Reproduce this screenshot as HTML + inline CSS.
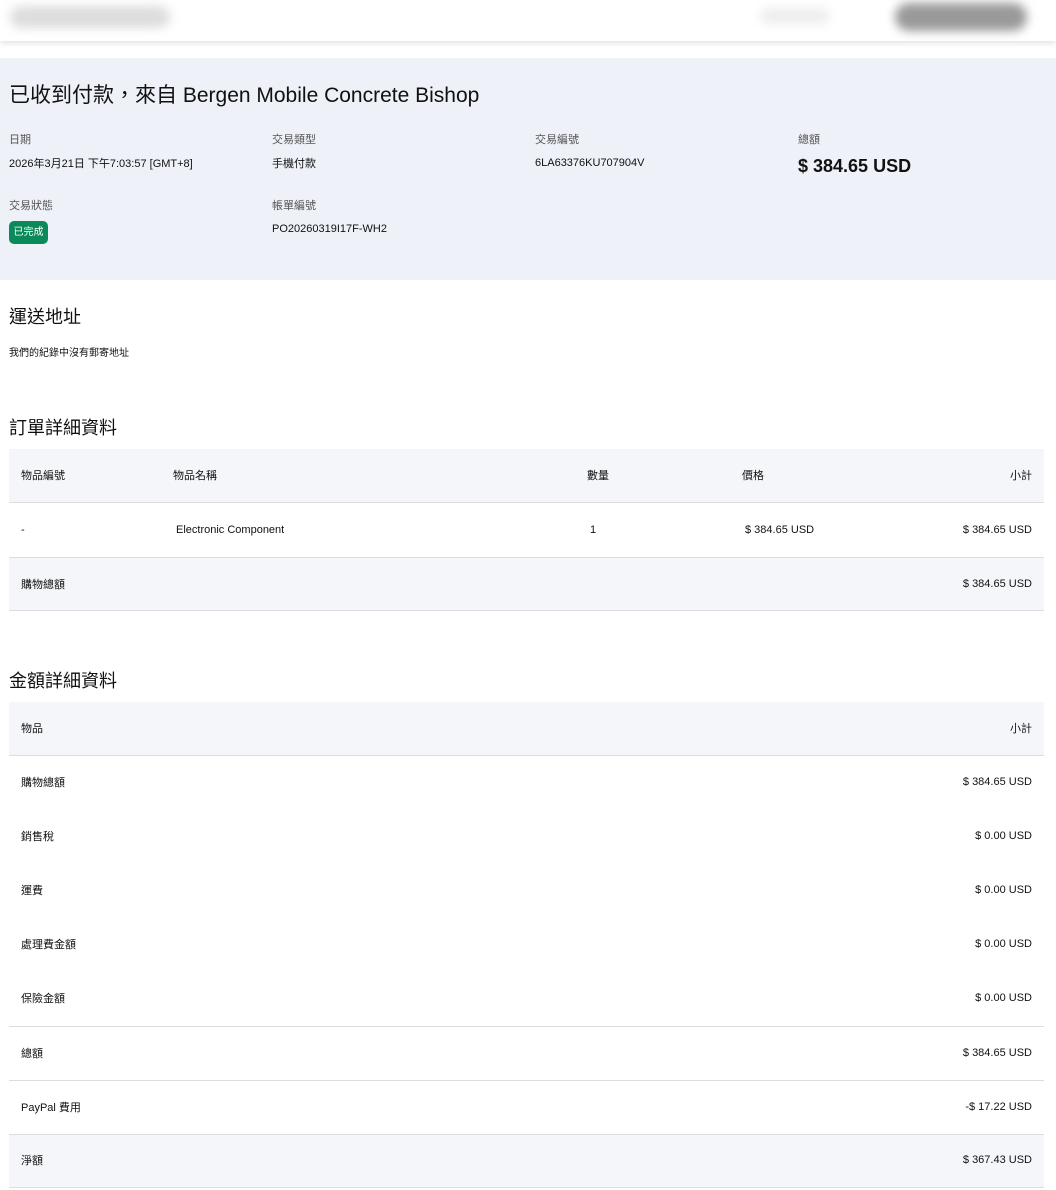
<!DOCTYPE html>
<html><head><meta charset="utf-8"><style>
*{margin:0;padding:0;box-sizing:border-box}
body{width:1056px;height:1190px;background:#fff;font-family:"Liberation Sans","Noto Sans CJK TC",sans-serif;color:#111;position:relative;overflow:hidden}
.a{position:absolute;white-space:nowrap}
.c{margin-top:-2px}
.hdr{position:absolute;left:0;top:0;width:1056px;height:41px;background:#fff;box-shadow:0 2px 6px rgba(0,0,0,.12)}
.blur{position:absolute;filter:blur(5px);border-radius:12px}
.panel{position:absolute;left:0;top:58px;width:1056px;height:222px;background:#eef1f8}
.lbl{font-size:11px;color:#555}
.val{font-size:11px;color:#111}
.sm{font-size:11px}
.row{position:absolute;left:9px;width:1035px}
.bg{background:#f5f6fa}
.bl{border-bottom:1px solid #dcdde2}
h2{position:absolute;font-size:18px;font-weight:normal;left:9px}
</style></head><body>
<div class="hdr">
<div class="blur" style="left:10px;top:6px;width:160px;height:22px;background:#ddd"></div>
<div class="blur" style="left:760px;top:8px;width:70px;height:16px;background:#eee"></div>
<div class="blur" style="left:895px;top:3px;width:132px;height:28px;background:#999;border-radius:16px"></div>
</div>
<div class="panel"></div>
<div class="a" style="left:9px;top:79px;font-size:21px">已收到付款，來自 Bergen Mobile Concrete Bishop</div>
<div class="a lbl c" style="left:9px;top:133px">日期</div>
<div class="a lbl c" style="left:272px;top:133px">交易類型</div>
<div class="a lbl c" style="left:535px;top:133px">交易編號</div>
<div class="a lbl c" style="left:798px;top:133px">總額</div>
<div class="a val c" style="left:9px;top:157px">2026年3月21日 下午7:03:57 [GMT+8]</div>
<div class="a val c" style="left:272px;top:157px">手機付款</div>
<div class="a val" style="left:535px;top:157px">6LA63376KU707904V</div>
<div class="a" style="left:798px;top:156px;font-size:18px;font-weight:bold">$ 384.65 USD</div>
<div class="a lbl c" style="left:9px;top:199px">交易狀態</div>
<div class="a lbl c" style="left:272px;top:199px">帳單編號</div>
<div class="a" style="left:9px;top:221px;width:39px;height:23px;background:#0a8a5a;color:#fff;border-radius:5px;font-size:10px;line-height:23px;text-align:center">已完成</div>
<div class="a val" style="left:272px;top:223px">PO20260319I17F-WH2</div>

<h2 style="top:303px">運送地址</h2>
<div class="a sm c" style="left:9px;top:346px;font-size:10px">我們的紀錄中沒有郵寄地址</div>

<h2 style="top:414px">訂單詳細資料</h2>
<div class="row bg bl" style="top:449px;height:54px"></div>
<div class="row bl" style="top:503px;height:55px"></div>
<div class="row bg bl" style="top:558px;height:53px"></div>
<div class="a sm c" style="left:21px;top:469px">物品編號</div>
<div class="a sm c" style="left:173px;top:469px">物品名稱</div>
<div class="a sm c" style="left:587px;top:469px">數量</div>
<div class="a sm c" style="left:742px;top:469px">價格</div>
<div class="a sm c" style="right:24px;top:469px">小計</div>
<div class="a sm" style="left:21px;top:524px">-</div>
<div class="a sm" style="left:176px;top:524px">Electronic Component</div>
<div class="a sm" style="left:590px;top:524px">1</div>
<div class="a sm" style="left:745px;top:524px">$ 384.65 USD</div>
<div class="a sm" style="right:24px;top:524px">$ 384.65 USD</div>
<div class="a sm c" style="left:21px;top:578px">購物總額</div>
<div class="a sm" style="right:24px;top:578px">$ 384.65 USD</div>

<h2 style="top:667px">金額詳細資料</h2>
<div class="row bg bl" style="top:702px;height:54px"></div>
<div class="row bl" style="top:972px;height:55px"></div>
<div class="row bl" style="top:1027px;height:54px"></div>
<div class="row bl" style="top:1081px;height:54px"></div>
<div class="row bg bl" style="top:1135px;height:53px"></div>
<div class="a sm c" style="left:21px;top:722px">物品</div>
<div class="a sm c" style="right:24px;top:722px">小計</div>
<div class="a sm c" style="left:21px;top:776px">購物總額</div><div class="a sm" style="right:24px;top:776px">$ 384.65 USD</div>
<div class="a sm c" style="left:21px;top:830px">銷售稅</div><div class="a sm" style="right:24px;top:830px">$ 0.00 USD</div>
<div class="a sm c" style="left:21px;top:884px">運費</div><div class="a sm" style="right:24px;top:884px">$ 0.00 USD</div>
<div class="a sm c" style="left:21px;top:938px">處理費金額</div><div class="a sm" style="right:24px;top:938px">$ 0.00 USD</div>
<div class="a sm c" style="left:21px;top:992px">保險金額</div><div class="a sm" style="right:24px;top:992px">$ 0.00 USD</div>
<div class="a sm c" style="left:21px;top:1047px">總額</div><div class="a sm" style="right:24px;top:1047px">$ 384.65 USD</div>
<div class="a sm c" style="left:21px;top:1101px">PayPal 費用</div><div class="a sm" style="right:24px;top:1101px">-$ 17.22 USD</div>
<div class="a sm c" style="left:21px;top:1154px">淨額</div><div class="a sm" style="right:24px;top:1154px">$ 367.43 USD</div>
</body></html>
